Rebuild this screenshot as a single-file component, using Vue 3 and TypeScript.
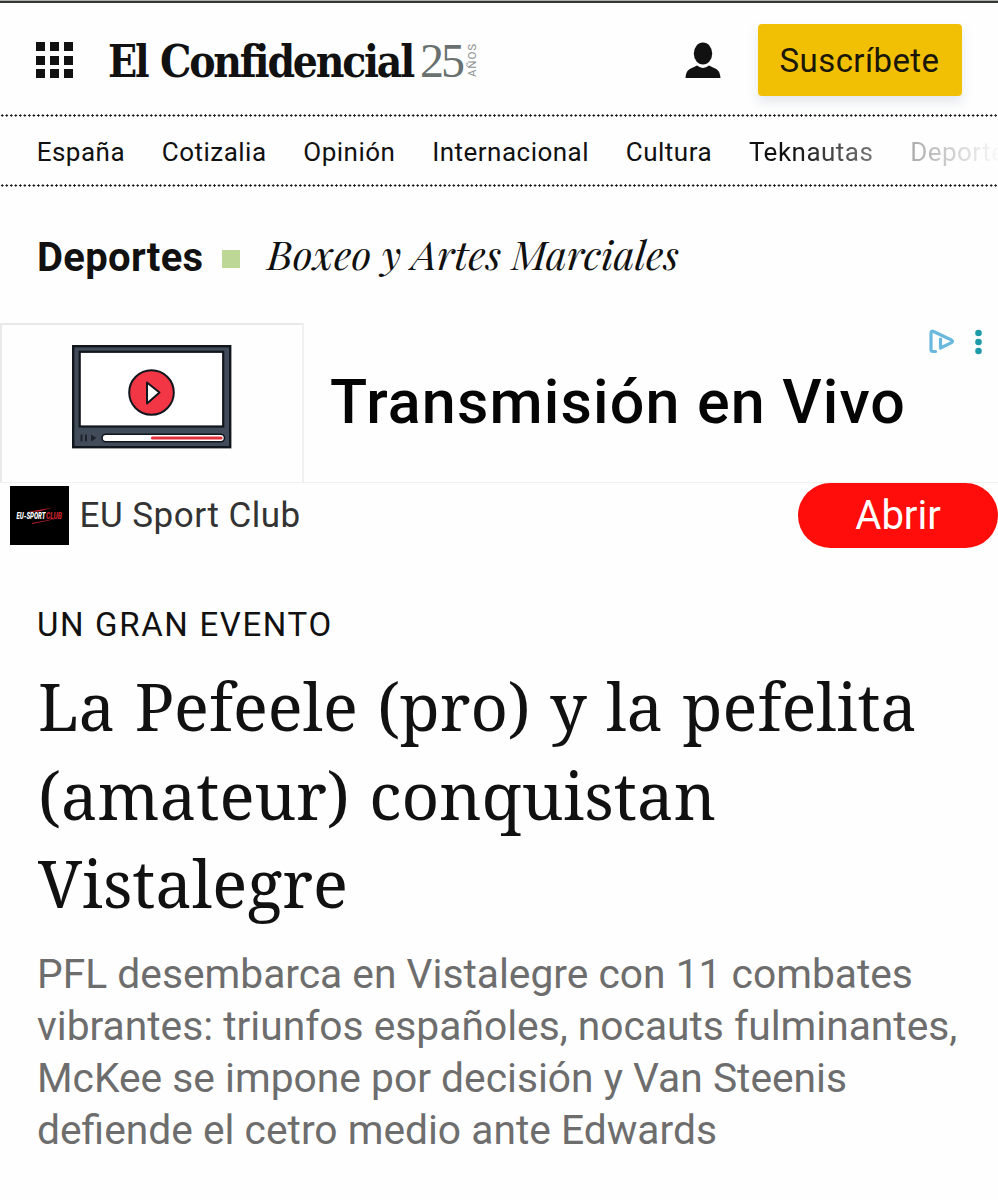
<script setup lang="ts">
const sections: string[] = ['España', 'Cotizalia', 'Opinión', 'Internacional', 'Cultura', 'Teknautas', 'Deportes']
const gridCells = [0, 1, 2, 3, 4, 5, 6, 7, 8]
const headline = [
  { text: 'La Pefeele (pro) y la pefelita', width: 879 },
  { text: '(amateur) conquistan', width: 678 },
  { text: 'Vistalegre', width: 310 },
]
const summary: string[] = [
  'PFL desembarca en Vistalegre con 11 combates',
  'vibrantes: triunfos españoles, nocauts fulminantes,',
  'McKee se impone por decisión y Van Steenis',
  'defiende el cetro medio ante Edwards',
]
</script>

<template>
  <div class="page">
    <header class="masthead">
      <button class="grid-btn" aria-label="Menú">
        <span v-for="c in gridCells" :key="c" class="cell"></span>
      </button>
      <svg class="logo" width="372" height="50" viewBox="0 0 372 50">
        <text class="brand" x="-1" y="40" textLength="39.500" lengthAdjust="spacingAndGlyphs">El</text>
        <text class="brand" x="51" y="40" textLength="253" lengthAdjust="spacingAndGlyphs">Confidencial</text>
        <text class="years" x="311" y="40" textLength="42" lengthAdjust="spacingAndGlyphs">25</text>
        <text class="anos" transform="translate(366.500 40) rotate(-90)" textLength="33">AÑOS</text>
      </svg>
      <svg class="user" width="36" height="37" viewBox="0 0 36 37">
        <ellipse cx="18" cy="11.500" rx="9.200" ry="11" />
        <path d="M.5 36C1 29.500 3 27.500 8 25.500L12 23.500Q18 28.300 24 23.500L28 25.500C33 27.500 35 29.500 35.500 36Z" />
      </svg>
      <button class="subscribe">Suscríbete</button>
    </header>

    <nav class="sections">
      <a v-for="s in sections" :key="s">{{ s }}</a>
    </nav>

    <div class="crumbs">
      <strong>Deportes</strong>
      <i class="square"></i>
      <svg class="sub" width="420" height="56" viewBox="0 0 420 56">
        <text x="1" y="40" textLength="412" lengthAdjust="spacingAndGlyphs">Boxeo y Artes Marciales</text>
      </svg>
    </div>

    <section class="ad">
      <div class="ad-top">
        <div class="ad-image">
          <svg width="160" height="104" viewBox="0 0 160 104">
            <rect x="1.200" y="1.200" width="157" height="101" fill="#414b59" stroke="#11161d" stroke-width="2.400" />
            <rect x="7.700" y="6.800" width="143.500" height="74.700" fill="#fff" stroke="#11161d" stroke-width="2.200" />
            <circle cx="79.500" cy="47.500" r="22.300" fill="#f33645" stroke="#11161d" stroke-width="2" />
            <path d="M75 37.500V58.500L87.500 47.500Z" fill="#fff" stroke="#11161d" stroke-width="2" stroke-linejoin="round" />
            <path d="M9.500 89.500V96.500M14 89.500V96.500" stroke="#1d242d" stroke-width="2" />
            <path d="M19 89.500V96.500L24.500 93Z" fill="#1d242d" />
            <rect x="30" y="89.200" width="122.500" height="7.600" rx="3.800" fill="#fff" stroke="#11161d" stroke-width="1.600" />
            <path d="M80.500 93H149" stroke="#e3303d" stroke-width="3.200" stroke-linecap="round" />
          </svg>
        </div>
        <div class="ad-title">Transmisión en Vivo</div>
        <svg class="adchoices" width="60" height="30" viewBox="0 0 60 30">
          <path d="M7.500 24.500H5Q3 24.500 3 22.500V6Q3 3.500 5.500 4.500L23.500 13Q25.500 14.300 23.500 15.600L12.500 21V12" fill="none" stroke="#6bb8de" stroke-width="3.200" stroke-linejoin="round" stroke-linecap="round" />
          <circle cx="50.500" cy="6" r="3.300" /><circle cx="50.500" cy="15" r="3.300" /><circle cx="50.500" cy="24" r="3.300" />
        </svg>
      </div>
      <div class="ad-bottom">
        <svg class="club" width="59" height="59" viewBox="0 0 59 59">
          <rect width="59" height="59" fill="#000" />
          <path d="M17 26L43 21.500L29 25.500ZM22 37L52 31.500L34 35.500L22 38Z" fill="#c8202a" />
          <text x="6.500" y="32.500" textLength="29" lengthAdjust="spacingAndGlyphs" fill="#fff">EU-SPORT</text>
          <text x="36" y="32.500" textLength="16" lengthAdjust="spacingAndGlyphs" fill="#c8202a">CLUB</text>
        </svg>
        <span class="club-name">EU Sport Club</span>
        <button class="open">Abrir</button>
      </div>
    </section>

    <article>
      <p class="kicker">UN GRAN EVENTO</p>
      <h1>
        <svg v-for="l in headline" :key="l.text" width="930" height="88.500">
          <text x="1" y="62.700" :textLength="l.width" lengthAdjust="spacingAndGlyphs">{{ l.text }}</text>
        </svg>
      </h1>
      <p class="summary"><span v-for="l in summary" :key="l">{{ l }}</span></p>
    </article>
  </div>
</template>

<style>
body { margin: 0; background: #fefefe; }
</style>

<style scoped>
.page {
  box-sizing: border-box;
  width: 998px;
  height: 1200px;
  overflow: hidden;
  background: #fefefe;
  color: #111;
  font-family: Roboto, "Liberation Sans", sans-serif;
  border-top: 1px solid #a9afab;
}
button { border: 0; padding: 0; font-family: inherit; }
svg { display: block; overflow: visible; flex: none; }
.masthead {
  box-sizing: border-box;
  height: 113px;
  border-top: 2px solid #333835;
  padding: 0 36.500px 0 36px;
  display: flex;
  align-items: center;
}
.grid-btn {
  display: grid;
  grid-template-columns: repeat(3, 9px);
  gap: 4.800px;
  background: none;
  margin-top: 3px;
}
.cell { height: 9px; background: #111; }
.logo { margin: 6px 0 0 36px; }
.brand { font: bold 44.500px "DejaVu Serif", serif; letter-spacing: -2.500px; fill: #111; }
.years { font: 48px "Liberation Serif", serif; letter-spacing: -3px; fill: #68716f; }
.anos { font: 11.500px Roboto, sans-serif; fill: #8a908e; }
.user { margin: 3px 0 0 auto; fill: #111; }
.subscribe {
  margin: 3px 0 0 36.500px;
  width: 204px;
  height: 72px;
  border-radius: 4px;
  background: #f1c004;
  color: #1a1608;
  font-size: 33px;
  letter-spacing: 0.400px;
  box-shadow: 0 6px 12px rgba(60, 90, 110, 0.140);
}
.sections {
  height: 73px;
  box-sizing: border-box;
  padding: 3px 0 0 36.700px;
  display: flex;
  align-items: center;
  gap: 36.800px;
  overflow: hidden;
  white-space: nowrap;
  font-size: 26px;
  letter-spacing: 0.480px;
  background:
    radial-gradient(circle, #1a1a1a 0.950px, transparent 1.350px) 0 0 / 4.530px 3px repeat-x,
    radial-gradient(circle, #1a1a1a 0.950px, transparent 1.350px) 0 100% / 4.530px 3px repeat-x;
}
.sections a:nth-child(6) {
  background: linear-gradient(90deg, #111 35%, #777);
  background-clip: text;
  color: transparent;
}
.sections a:nth-child(7) {
  background: linear-gradient(90deg, #aaa, #fefefe 86%);
  background-clip: text;
  color: transparent;
}
.crumbs { height: 136px; padding: 0 37px; display: flex; align-items: center; }
.crumbs strong { font-size: 40px; letter-spacing: 0.300px; margin-top: 4px; }
.square { width: 18px; height: 18px; background: #bdd796; margin: 8px 0 0 19px; }
.sub { margin: 6px 0 0 26px; }
.sub text { font: italic 40px "Playfair Display", "Liberation Serif", serif; fill: #111; }
.ad-top {
  height: 158.500px;
  display: flex;
  align-items: flex-start;
  border-bottom: 1px solid #f0f0f0;
}
.ad-image {
  box-sizing: border-box;
  width: 304px;
  height: 159px;
  padding: 20px 0 0 70px;
  border: 2px solid #e9e9e9;
  border-right-color: #f1f1f1;
  border-bottom: 0;
}
.ad-title { width: 577px; margin: 46px 0 0 26px; font-size: 61px; font-weight: 500; line-height: 67px; letter-spacing: 1.150px; color: #050505; white-space: nowrap; }
.adchoices { margin: 4px 0 0 21px; fill: #1f9aa8; }
.ad-bottom { height: 65px; display: flex; align-items: center; padding-left: 10px; }
.club { margin-top: 1px; }
.club text { font: italic 900 8.500px Roboto, sans-serif; }
.club-name { font-size: 35px; letter-spacing: 0.500px; color: #333; margin-left: 10.500px; }
.open { margin-left: auto; width: 200px; height: 65px; border-radius: 33px; background: #fe0d0b; color: #fff; font-size: 40px; }
article { padding: 55.500px 37px 0; }
.kicker { margin: 0; font-size: 33px; line-height: 44px; letter-spacing: 1.650px; }
h1 { margin: 21px 0 0; font-weight: 400; }
h1 text { font: 65px "Noto Serif", "DejaVu Serif Condensed", "DejaVu Serif", serif; word-spacing: 2.500px; fill: #111; }
.summary { margin: 14px 0 0; color: #6d6d6d; font-size: 40.750px; line-height: 52.300px; }
.summary span { display: block; white-space: nowrap; }
</style>
